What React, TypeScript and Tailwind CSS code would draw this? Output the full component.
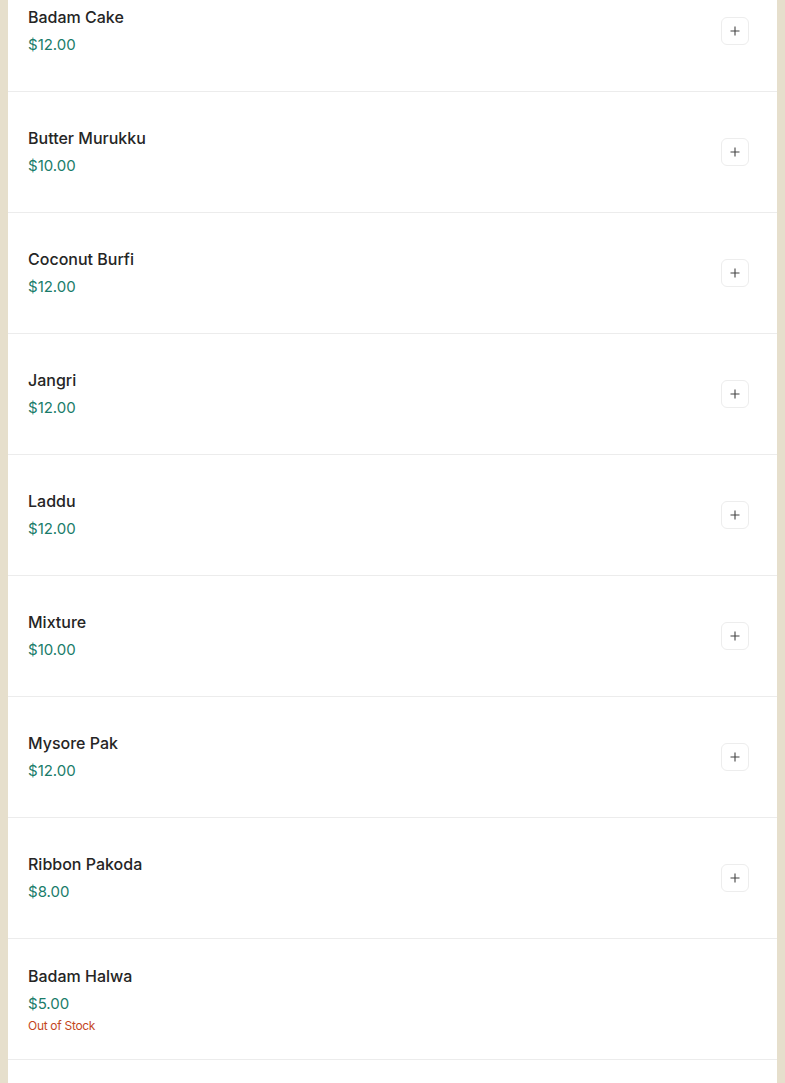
import React from 'react';

interface MenuItem {
  name: string;
  price: number;
  inStock: boolean;
}

const ITEMS: MenuItem[] = [
  { name: 'Badam Cake', price: 12, inStock: true },
  { name: 'Butter Murukku', price: 10, inStock: true },
  { name: 'Coconut Burfi', price: 12, inStock: true },
  { name: 'Jangri', price: 12, inStock: true },
  { name: 'Laddu', price: 12, inStock: true },
  { name: 'Mixture', price: 10, inStock: true },
  { name: 'Mysore Pak', price: 12, inStock: true },
  { name: 'Ribbon Pakoda', price: 8, inStock: true },
  { name: 'Badam Halwa', price: 5, inStock: false },
];

function PlusIcon() {
  return (
    <svg width="10" height="10" viewBox="0 0 10 10" fill="none">
      <path d="M5 0.5v9M0.5 5h9" stroke="#444444" strokeWidth="1.1" />
    </svg>
  );
}

function ItemRow({ item }: { item: MenuItem }) {
  return (
    <div className="flex h-[121px] items-center justify-between border-b border-[#ececec] pl-5 pr-7">
      <div className="flex flex-col pt-[2px]">
        <span className="-mt-[2px] text-[16px] font-medium leading-6 text-[#252525]">
          {item.name}
        </span>
        <span className="mt-[4px] text-[15px] font-normal leading-6 text-[#1a7c6a]">
          ${item.price.toFixed(2)}
        </span>
        {!item.inStock && (
          <span className="mt-[2px] text-[12px] leading-4 tracking-[-0.3px] text-[#c4471d]">
            Out of Stock
          </span>
        )}
      </div>
      {item.inStock && (
        <button className="flex h-7 w-7 items-center justify-center rounded-md border border-[#ededed] bg-white">
          <PlusIcon />
        </button>
      )}
    </div>
  );
}

export default function App() {
  return (
    <div
      className="flex h-[1083px] overflow-hidden bg-[#e6dfcc] px-2"
      style={{ fontFamily: 'Inter, "Noto Sans", sans-serif' }}
    >
      <div className="flex-1 bg-white">
        <div className="-mt-[29px]">
          {ITEMS.map((item) => (
            <ItemRow key={item.name} item={item} />
          ))}
        </div>
      </div>
    </div>
  );
}
